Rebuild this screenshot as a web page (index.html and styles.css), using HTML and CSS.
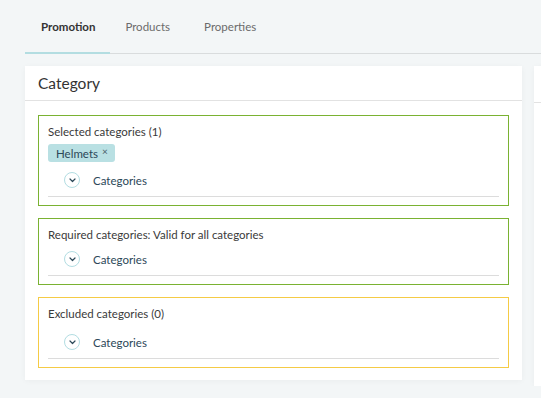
FILE: index.html
```html
<!DOCTYPE html>
<html lang="en">
<head>
  <meta charset="UTF-8" />
  <meta name="viewport" content="width=device-width, initial-scale=1.0" />
  <title>Promotion</title>
  <link rel="stylesheet" href="styles.css">
</head>
<body>
  <nav class="tabs">
    <a class="tab active">Promotion</a>
    <a class="tab">Products</a>
    <a class="tab">Properties</a>
  </nav>

  <div class="content">
    <div class="card">
      <div class="card-header">Category</div>
      <div class="card-body">
        <div class="group group-ok">
          <div class="group-title">Selected categories (1)</div>
          <div class="tags">
            <span class="tag">Helmets <span class="tag-x">&times;</span></span>
          </div>
          <div class="row">
            <span class="toggle">
              <svg width="7" height="5" viewBox="0 0 7 5"><path d="M1 1l2.5 2.5L6 1" fill="none" stroke="#2c4858" stroke-width="1.2" stroke-linecap="round" stroke-linejoin="round"/></svg>
            </span>
            <span class="row-label">Categories</span>
          </div>
        </div>

        <div class="group group-ok">
          <div class="group-title">Required categories: Valid for all categories</div>
          <div class="row">
            <span class="toggle">
              <svg width="7" height="5" viewBox="0 0 7 5"><path d="M1 1l2.5 2.5L6 1" fill="none" stroke="#2c4858" stroke-width="1.2" stroke-linecap="round" stroke-linejoin="round"/></svg>
            </span>
            <span class="row-label">Categories</span>
          </div>
        </div>

        <div class="group group-warn">
          <div class="group-title">Excluded categories (0)</div>
          <div class="row row-spaced">
            <span class="toggle">
              <svg width="7" height="5" viewBox="0 0 7 5"><path d="M1 1l2.5 2.5L6 1" fill="none" stroke="#2c4858" stroke-width="1.2" stroke-linecap="round" stroke-linejoin="round"/></svg>
            </span>
            <span class="row-label">Categories</span>
          </div>
        </div>
      </div>
    </div>

    <div class="card card-next">
      <div class="card-header"></div>
    </div>
  </div>
</body>
</html>
```

FILE: styles.css
```css
body {
  margin: 0;
  background: #f3f6f7;
  font-family: Lato, "Noto Sans", sans-serif;
  color: #333;
  overflow: hidden;
}
.tabs {
  display: flex;
  margin-left: 25px;
  height: 54px;
  border-bottom: 1px solid #d9dcdd;
  box-sizing: border-box;
}
.tab {
  padding: 20px 15px 0;
  font-size: 11.5px;
  color: #6b6b6b;
  box-sizing: border-box;
  height: 55px;
}
.tab.active {
  color: #333;
  font-weight: 700;
  padding: 20px 15px 0 16px;
  border-bottom: 2px solid #b3dde1;
  height: 54px;
}
.tab:last-child {
  margin-left: 4px;
}
.content {
  display: flex;
  align-items: flex-start;
  gap: 12px;
  padding: 12px 0 0 25px;
  overflow: hidden;
}
.card {
  flex: 0 0 497px;
  background: #fff;
  box-shadow: 0 1px 6px rgba(0, 0, 0, 0.04);
}
.card-next {
  flex: 0 0 200px;
  height: 320px;
}
.card-header {
  height: 34px;
  line-height: 34px;
  padding: 0 13px;
  font-size: 15.5px;
  color: #333;
  border-bottom: 1px solid #e2e2e2;
}
.card-next .card-header {
  height: 36px;
}
.card-body {
  padding: 14px 13px 12px;
}
.group {
  border: 1px solid #7ab232;
  padding: 8px 9px 8px;
  margin-bottom: 12px;
}
.group:last-child {
  margin-bottom: 0;
}
.group-warn {
  border-color: #f5cb45;
}
.group-title {
  font-size: 11.5px;
  line-height: 16px;
  color: #3a3a3a;
}
.tags {
  display: flex;
  margin-top: 4px;
}
.tag {
  display: inline-flex;
  align-items: center;
  height: 18px;
  padding: 0 7px 0 8px;
  background: #b9e0e3;
  border-radius: 3px;
  font-size: 11.5px;
  color: #2c4858;
}
.tag-x {
  font-size: 10px;
  margin-left: 4px;
  margin-top: -5px;
  color: #4a5e68;
}
.row {
  display: flex;
  align-items: center;
  height: 32px;
  padding-left: 16px;
  border-bottom: 1px solid #dcdcdc;
  margin-top: 2px;
}
.row-spaced {
  margin-top: 4px;
}
.group-ok .group-title + .row {
  margin-top: 0;
}
.toggle {
  display: flex;
  align-items: center;
  justify-content: center;
  width: 14px;
  height: 14px;
  border: 1px solid #b2dde2;
  border-radius: 50%;
}
.row-label {
  margin-left: 13px;
  font-size: 11.5px;
  color: #2c4858;
}
```
